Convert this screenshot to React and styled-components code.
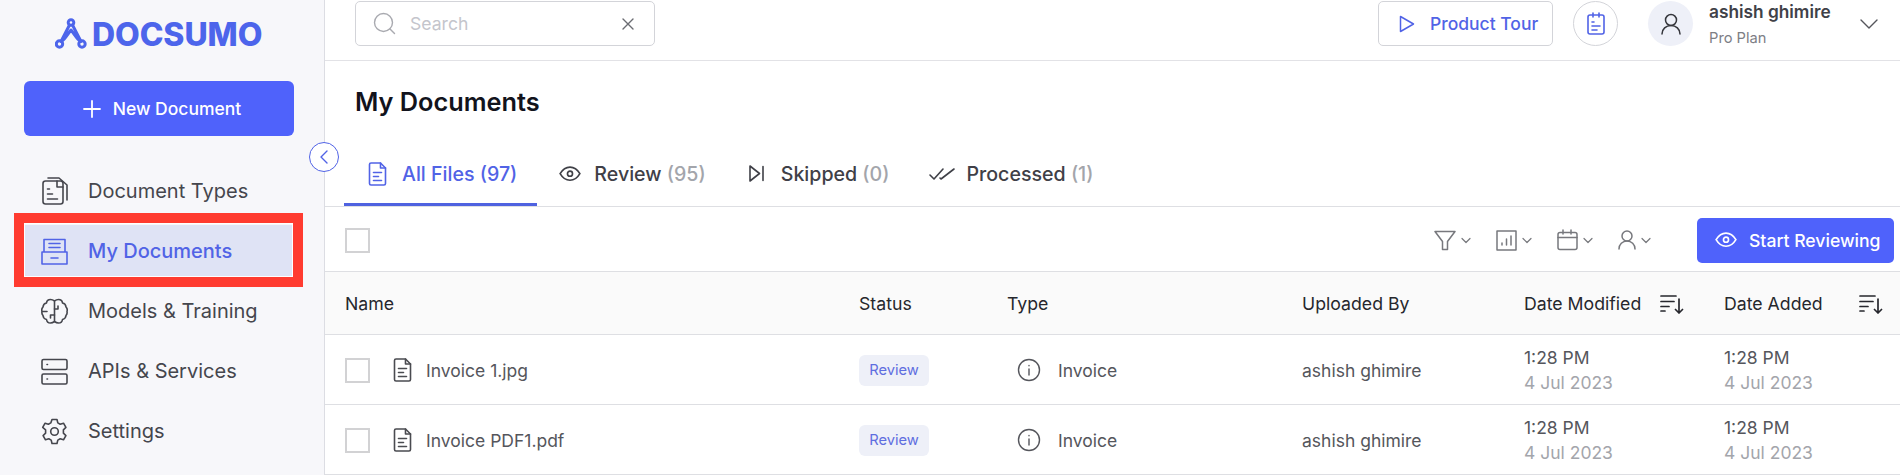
import React from 'react';
import styled, { createGlobalStyle } from 'styled-components';

const GlobalStyle = createGlobalStyle`
	html, body { margin: 0; padding: 0; background: #fff; }
	body { font-family: Inter, "Noto Sans", sans-serif; color: #3f4047; overflow: hidden; }
	* { box-sizing: border-box; }
`;

const Page = styled.div`
	display: flex;
	width: 1900px;
	height: 475px;
	overflow: hidden;
	position: relative;
`;

const Sidebar = styled.aside`
	position: relative;
	flex: 0 0 325px;
	background: #f7f7fa;
	border-right: 1px solid #dcdde3;
	padding: 18px 30px 0 24px;
`;

const Logo = styled.div`
	display: flex;
	align-items: center;
	gap: 5px;
	height: 32px;
	margin-left: 31px;
	color: #4d65eb;
	font-size: 32px;
	font-weight: 800;
	letter-spacing: -0.1px;
`;

const NewButton = styled.button`
	display: flex;
	align-items: center;
	justify-content: center;
	gap: 12px;
	width: 270px;
	height: 55px;
	margin-top: 31px;
	padding: 0 0 0 6px;
	border: 0;
	border-radius: 6px;
	background: #4f62fb;
	color: #fff;
	font: 500 17.5px Inter, sans-serif;
`;

const Nav = styled.nav`
	display: flex;
	flex-direction: column;
	margin-top: 25px;
`;

const NavItem = styled.div`
	display: flex;
	align-items: center;
	gap: 20px;
	height: 60px;
	padding-left: 17px;
	font-size: 20px;
	font-weight: ${(p) => (p.$active ? 500 : 400)};
	color: ${(p) => (p.$active ? '#5163e6' : '#45464d')};
	${(p) => p.$active && `
		background: #dfe3f5;
		height: 52px;
		margin: 4px 0;
	`}
`;

const Highlight = styled.div`
	position: absolute;
	left: 14px;
	top: 213px;
	width: 289px;
	height: 74px;
	border: 10px solid #ff3b30;
	box-shadow: inset 0 0 0 1px #fff;
	pointer-events: none;
`;

const Collapse = styled.div`
	position: absolute;
	left: 309px;
	top: 142px;
	width: 30px;
	height: 30px;
	border: 1px solid #5163e6;
	border-radius: 50%;
	background: #fff;
	color: #5163e6;
	display: flex;
	align-items: center;
	justify-content: center;
	z-index: 2;
`;

const Main = styled.main`
	flex: 1;
	min-width: 0;
	display: flex;
	flex-direction: column;
`;

const Header = styled.header`
	display: flex;
	align-items: flex-start;
	height: 61px;
	padding: 1px 0 0 30px;
	border-bottom: 1px solid #e2e2e6;
`;

const SearchBox = styled.div`
	display: flex;
	align-items: center;
	width: 300px;
	height: 45px;
	padding: 0 20px 0 17px;
	border: 1px solid #d3d4d9;
	border-radius: 5px;
	color: #c4c5cc;
	font-size: 17.6px;
`;

const SearchText = styled.span`
	flex: 1;
	margin-left: 14px;
`;

const HeaderRight = styled.div`
	display: flex;
	align-items: center;
	margin-left: auto;
	height: 45px;
`;

const TourButton = styled.div`
	display: flex;
	align-items: center;
	gap: 15px;
	width: 175px;
	height: 45px;
	padding-left: 20px;
	border: 1px solid #d3d4d9;
	border-radius: 5px;
	color: #5163e6;
	font-size: 17.5px;
	font-weight: 500;
`;

const RoundButton = styled.div`
	display: flex;
	align-items: center;
	justify-content: center;
	width: 45px;
	height: 45px;
	margin-left: 20px;
	border: 1px solid #d3d4d9;
	border-radius: 50%;
	color: #5163e6;
`;

const Avatar = styled.div`
	display: flex;
	align-items: center;
	justify-content: center;
	width: 45px;
	height: 45px;
	margin-left: 30px;
	border-radius: 50%;
	background: #eef0f8;
	color: #35363c;
`;

const UserInfo = styled.div`
	display: flex;
	flex-direction: column;
	width: 151px;
	margin-left: 16px;
`;

const UserName = styled.span`
	font-size: 17.3px;
	font-weight: 600;
	color: #404148;
	line-height: 24px;
	margin-top: 0;
`;

const UserPlan = styled.span`
	font-size: 14.7px;
	color: #7d7e85;
	line-height: 20px;
	margin-top: 4px;
`;

const Chevron = styled.div`
	color: #55565c;
	width: 40px;
	display: flex;
`;

const Title = styled.h1`
	margin: 0;
	height: 76px;
	padding: 26px 0 0 30px;
	font-size: 25.3px;
	line-height: 30px;
	font-weight: 600;
	color: #12131c;
`;

const Tabs = styled.div`
	display: flex;
	height: 71px;
	padding-left: 19px;
	border-bottom: 1px solid #dedfe3;
`;

const Tab = styled.div`
	display: flex;
	align-items: center;
	gap: ${(p) => p.$iconGap}px;
	height: 70px;
	padding: 8px 20px 0 24px;
	margin-right: ${(p) => p.$gap || 0}px;
	font-size: 19.6px;
	font-weight: 500;
	color: ${(p) => (p.$active ? '#5163e6' : '#3f4047')};
	border-bottom: 3px solid ${(p) => (p.$active ? '#4f62e0' : 'transparent')};
`;

const Count = styled.span`
	color: ${(p) => (p.$active ? '#5163e6' : '#a3a5ab')};
`;

const Toolbar = styled.div`
	display: flex;
	align-items: center;
	height: 65px;
	padding: 2px 6px 0 20px;
	border-bottom: 1px solid #dedfe3;
`;

const Checkbox = styled.span`
	display: block;
	flex: none;
	width: 25px;
	height: 25px;
	border: 2px solid #d2d2d4;
	background: #fff;
`;

const ToolIcons = styled.div`
	display: flex;
	align-items: center;
	margin-left: auto;
	color: #77787d;
`;

const ToolIcon = styled.div`
	display: flex;
	align-items: center;
	gap: 5px;
	margin-right: 25px;
`;

const StartButton = styled.div`
	display: flex;
	align-items: center;
	gap: 12px;
	width: 197px;
	height: 45px;
	margin-left: 21px;
	padding-left: 18px;
	border-radius: 5px;
	background: #4f62fb;
	color: #fff;
	font-size: 17.6px;
	font-weight: 500;
`;

const Row = styled.div`
	display: grid;
	grid-template-columns: 514px 148px 295px 222px 200px 1fr;
	align-items: center;
	flex: none;
	height: ${(p) => (p.$head ? 63 : 70)}px;
	padding: 1px 0 0 20px;
	font-size: ${(p) => (p.$head ? 17.7 : 17.5)}px;
	color: ${(p) => (p.$head ? '#26272d' : '#55565c')};
	background: ${(p) => (p.$head ? '#fafafa' : '#fff')};
	border-bottom: 1px solid #dedfe3;
`;

const HeadSort = styled.div`
	display: flex;
	align-items: center;
	justify-content: space-between;
	padding-right: ${(p) => p.$pad}px;
	color: #26272d;
`;

const NameCell = styled.div`
	display: flex;
	align-items: center;
	gap: 14px;
`;

const FileIconBox = styled.span`
	display: block;
	margin-left: ${(p) => p.$offset || 0}px;
	color: ${(p) => p.$color || 'inherit'};
`;

const Badge = styled.span`
	display: inline-flex;
	align-items: center;
	justify-content: center;
	width: 70px;
	height: 31px;
	border-radius: 6px;
	background: #eef0f8;
	color: #5f6ee0;
	font-size: 14.7px;
`;

const TypeCell = styled.div`
	display: flex;
	align-items: center;
	gap: 17px;
	padding-left: 10px;
`;

const DateCell = styled.div`
	display: flex;
	flex-direction: column;
	line-height: 25px;
	color: #55565c;
`;

const DateDay = styled.span`
	color: #a3a5ab;
`;

const Svg = ({ size = 24, w, h, sw = 1.6, children }) => (
	<svg width={w || size} height={h || size} viewBox={`0 0 ${w || size} ${h || size}`} fill="none" stroke="currentColor" strokeWidth={sw} strokeLinecap="round" strokeLinejoin="round" style={{ flex: 'none', display: 'block' }}>
		{children}
	</svg>
);

const FileIcon = ({ color, offset }) => (
	<FileIconBox $color={color} $offset={offset}>
		<svg width="19" height="24" viewBox="0 0 18 24" fill="none" stroke="currentColor" strokeWidth="1.6" strokeLinecap="round" strokeLinejoin="round" style={{ display: 'block' }}>
			<path d="M2.500 1h9.500l5 5v15.500a1.500 1.500 0 0 1-1.500 1.500h-13A1.500 1.500 0 0 1 1 21.500V2.500A1.500 1.500 0 0 1 2.500 1z" />
			<path d="M12 1v5h5M5 10.500h8M5 14.500h5M5 18.500h8" />
		</svg>
	</FileIconBox>
);

const EyeIcon = ({ w = 22 }) => (
	<svg width={w} height={w * 0.7} viewBox="0 0 20 14" fill="none" stroke="currentColor" strokeWidth="1.5" style={{ flex: 'none', display: 'block' }}>
		<path d="M1 7c2.300-3.900 5.300-6 9-6s6.700 2.100 9 6c-2.300 3.900-5.300 6-9 6s-6.700-2.100-9-6z" />
		<circle cx="10" cy="7" r="2.300" />
	</svg>
);

const SmallChevron = () => (
	<Svg w={10} h={7} sw={1.2}><path d="M1 1.500l4 4 4-4" /></Svg>
);

const SortIcon = () => (
	<Svg w={24} h={20} sw={1.7}>
		<path d="M1 2h15M1 7.500h13M1 12.500h8M1 17h4M19 5v14M15.500 15.500l3.500 3.500 3.500-3.500" />
	</Svg>
);

const InfoIcon = () => (
	<Svg size={24} sw={1.4}>
		<circle cx="12" cy="12" r="10.500" />
		<path d="M12 11v6M12 7.500v.3" />
	</Svg>
);

const navItems = [
	{ label: 'Document Types', icon: (
		<Svg w={27} h={28}>
			<rect x="2" y="4" width="20" height="23" rx="2.500" />
			<path d="M7 1h11l8 7v15M6.500 12h2M6.500 17h5M6.500 22h10M16 4v6h6" />
		</Svg>
	) },
	{ label: 'My Documents', active: true, icon: (
		<Svg w={27} h={27}>
			<path d="M3 14V1.500h21V14M1 14h25v12H1zM8 5.500h11M8 9.500h11M10 20h7" />
		</Svg>
	) },
	{ label: 'Models & Training', icon: (
		<Svg w={27} h={27}>
			<path d="M13.500 3v21M9.500 1.500a4 4 0 0 0-4 3.500 4.500 4.500 0 0 0-3.500 4 4.500 4.500 0 0 0-1 4.500 4.500 4.500 0 0 0 1 4 4.500 4.500 0 0 0 3.500 4 4 4 0 0 0 4 3.500c2 0 4-1.500 4-1.500s2 1.500 4 1.500a4 4 0 0 0 4-3.500 4.500 4.500 0 0 0 3.500-4 4.500 4.500 0 0 0 1-4 4.500 4.500 0 0 0-1-4.500 4.500 4.500 0 0 0-3.500-4 4 4 0 0 0-4-3.500c-2 0-4 1.500-4 1.500s-2-1.500-4-1.500z" />
			<path d="M13.500 11h3.500v-3M13.500 17H9.500v3M1.500 13.500H6" />
		</Svg>
	) },
	{ label: 'APIs & Services', icon: (
		<Svg w={27} h={27}>
			<rect x="1" y="1.500" width="25" height="10" rx="1.500" />
			<rect x="1" y="16" width="25" height="10" rx="1.500" />
			<path d="M6 6.500h.5M6 21h.5" />
		</Svg>
	) },
	{ label: 'Settings', icon: (
		<Svg w={27} h={27}>
			<circle cx="13.500" cy="13.500" r="3.800" />
			<path d="M11 1.500h5l.8 3.400 2.400 1.300 3.300-1 2.400 4.200-2.500 2.400v3.400l2.500 2.400-2.400 4.200-3.300-1-2.400 1.300-.8 3.400h-5l-.8-3.400-2.400-1.300-3.300 1-2.400-4.200 2.500-2.400v-3.400L1.700 9.400l2.400-4.200 3.300 1 2.400-1.300z" />
		</Svg>
	) },
];

const tabs = [
	{ label: 'All Files', count: 97, active: true, iconGap: 15, gap: -2, icon: <FileIcon /> },
	{ label: 'Review', count: 95, iconGap: 13, gap: -1, icon: <EyeIcon /> },
	{ label: 'Skipped', count: 0, iconGap: 17, gap: -4, icon: (
		<Svg w={15} h={17}><path d="M1 1l9.500 7.500L1 16zM14 1.500v14" /></Svg>
	) },
	{ label: 'Processed', count: 1, iconGap: 11, icon: (
		<Svg w={26} h={14}><path d="M1 8l4 4L14 2M11 11l1 1L25 2" /></Svg>
	) },
];

const docs = ['Invoice 1.jpg', 'Invoice PDF1.pdf'];

export default function App() {
	return (
		<Page>
			<GlobalStyle />
			<Sidebar>
				<Logo>
					<Svg w={32} h={32} sw={3}>
						<circle cx="16" cy="4.500" r="2.800" />
						<circle cx="4.500" cy="26" r="3.200" />
						<circle cx="27" cy="26" r="3.200" />
						<path d="M14.500 7L6 23.500M17.500 7L26 23.500M7 23c3-2 5-6 9-11 4 5 6 9 9 11" />
					</Svg>
					<span>DOCSUMO</span>
				</Logo>
				<NewButton>
					<Svg w={18} h={18} sw={1.8}><path d="M9 1v16M1 9h16" /></Svg>
					New Document
				</NewButton>
				<Nav>
					{navItems.map((item) => (
						<NavItem key={item.label} $active={item.active}>
							{item.icon}
							<span>{item.label}</span>
						</NavItem>
					))}
				</Nav>
			</Sidebar>
			<Collapse>
				<Svg w={10} h={16} sw={1.4}><path d="M8 2L2 8l6 6" /></Svg>
			</Collapse>
			<Highlight />
			<Main>
				<Header>
					<SearchBox>
						<span style={{ color: '#a9aab0' }}>
							<Svg size={23} sw={1.4}><circle cx="10.500" cy="10.500" r="9" /><path d="M17 17l4.500 4.500" /></Svg>
						</span>
						<SearchText>Search</SearchText>
						<span style={{ color: '#6b6c72' }}>
							<Svg size={12} sw={1.4}><path d="M1 1l10 10M11 1L1 11" /></Svg>
						</span>
					</SearchBox>
					<HeaderRight>
						<TourButton>
							<Svg w={16} h={18} sw={1.5}><path d="M1.500 1.500l13 7.500-13 7.500z" /></Svg>
							Product Tour
						</TourButton>
						<RoundButton>
							<Svg w={18} h={23} sw={1.6}>
								<rect x="1" y="3" width="16" height="19" rx="2" />
								<path d="M6 1v4M12 1v4M5 10h2M5 14h8M5 18h5" />
							</Svg>
						</RoundButton>
						<Avatar>
							<Svg w={20} h={22} sw={1.5}>
								<circle cx="10" cy="7" r="5.500" />
								<path d="M1 21c0-5 4-8.500 9-8.500s9 3.500 9 8.500" />
							</Svg>
						</Avatar>
						<UserInfo>
							<UserName>ashish ghimire</UserName>
							<UserPlan>Pro Plan</UserPlan>
						</UserInfo>
						<Chevron>
							<Svg w={18} h={10} sw={1.4}><path d="M1 1l8 8 8-8" /></Svg>
						</Chevron>
					</HeaderRight>
				</Header>
				<Title>My Documents</Title>
				<Tabs>
					{tabs.map((tab) => (
						<Tab key={tab.label} $active={tab.active} $gap={tab.gap} $iconGap={tab.iconGap}>
							{tab.icon}
							<span>{tab.label} <Count $active={tab.active}>({tab.count})</Count></span>
						</Tab>
					))}
				</Tabs>
				<Toolbar>
					<Checkbox />
					<ToolIcons>
						<ToolIcon>
							<Svg w={22} h={21} sw={1.5}><path d="M1 1.500h20l-7.500 10v8h-5v-8z" /></Svg>
							<SmallChevron />
						</ToolIcon>
						<ToolIcon>
							<Svg w={21} h={21} sw={1.5}><rect x="1" y="1" width="19" height="19" /><path d="M6 15v-2M10.500 15V9M15 15V6" /></Svg>
							<SmallChevron />
						</ToolIcon>
						<ToolIcon>
							<Svg w={21} h={22} sw={1.5}><rect x="1" y="3.500" width="19" height="17" rx="2" /><path d="M1 8.500h19M6 1v4M14 1v4" /></Svg>
							<SmallChevron />
						</ToolIcon>
						<ToolIcon>
							<Svg w={18} h={20} sw={1.5}><circle cx="9" cy="6" r="5" /><path d="M1 19c0-4.500 3.500-8 8-8s8 3.500 8 8" /></Svg>
							<SmallChevron />
						</ToolIcon>
					</ToolIcons>
					<StartButton>
						<EyeIcon />
						Start Reviewing
					</StartButton>
				</Toolbar>
				<Row $head>
					<span>Name</span>
					<span>Status</span>
					<span>Type</span>
					<span>Uploaded By</span>
					<HeadSort $pad={40}><span>Date Modified</span><SortIcon /></HeadSort>
					<HeadSort $pad={17}><span>Date Added</span><SortIcon /></HeadSort>
				</Row>
				{docs.map((name) => (
					<Row key={name}>
						<NameCell>
							<Checkbox />
							<FileIcon color="#4a4b50" offset={9} />
							<span>{name}</span>
						</NameCell>
						<span><Badge>Review</Badge></span>
						<TypeCell><InfoIcon />Invoice</TypeCell>
						<span>ashish ghimire</span>
						<DateCell><span>1:28 PM</span><DateDay>4 Jul 2023</DateDay></DateCell>
						<DateCell><span>1:28 PM</span><DateDay>4 Jul 2023</DateDay></DateCell>
					</Row>
				))}
			</Main>
		</Page>
	);
}
